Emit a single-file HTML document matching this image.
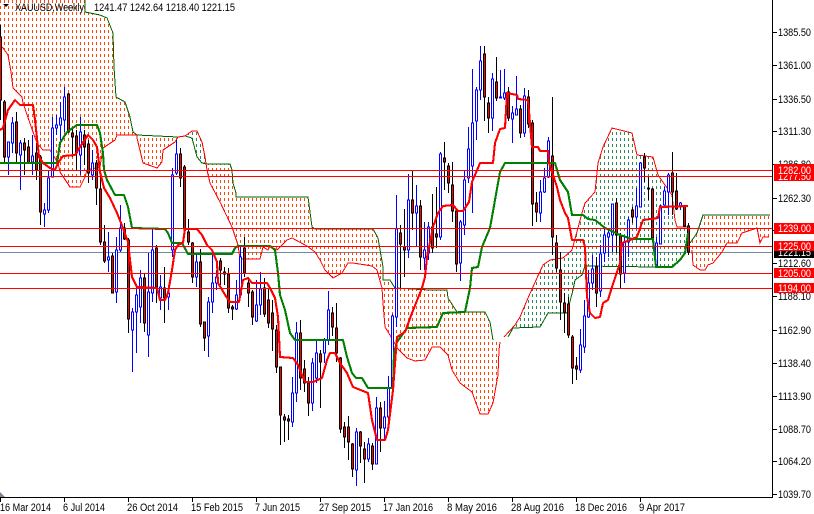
<!DOCTYPE html>
<html><head><meta charset="utf-8"><style>
html,body{margin:0;padding:0;background:#fff;width:814px;height:514px;overflow:hidden}
svg{display:block;position:absolute;left:0;top:0}
text{font-family:"Liberation Sans",sans-serif;font-size:11px;fill:#000}
.w{fill:#fff}
</style></head><body>
<svg width="814" height="514" viewBox="0 0 814 514" xmlns="http://www.w3.org/2000/svg">
<defs>
<pattern id="o" patternUnits="userSpaceOnUse" width="4" height="6"><rect x="0" y="0" width="1" height="3" fill="#FF4500"/></pattern>
<pattern id="g" patternUnits="userSpaceOnUse" width="4" height="6"><rect x="0" y="0" width="1" height="3" fill="#2E8B57"/></pattern>
<clipPath id="c"><rect x="0" y="0" width="772" height="497"/></clipPath>
</defs>
<g clip-path="url(#c)">
<line x1="0" x2="772" y1="252.5" y2="252.5" stroke="#778899"/>
<g shape-rendering="crispEdges">
<polygon fill="url(#o)" points="0,0 85,0 85,12 100,15 107,18 113,33 114,67 116,97 125,102 130,117 133,132 137,135 178,137 185,136 190,136 192,138 197,157 202,163 207,164 230,164 232,170 233,183 236,193 236,197 308,197 312,227 315,229 373,229 378,238 383,267 383,280 390,280 395,288 430,290 447,290 448,298 457,312 485,312 490,322 493,340 500,342 499,350 498,375 493,403 488,414 480,414 472,392 460,383 452,370 448,355 440,347 432,347 425,360 415,361 407,358 397,348 393,340 385,327 383,303 382,288 377,270 372,266 353,263 348,263 342,273 333,278 325,270 320,260 315,252 307,246 292,238 287,240 277,250 270,246 268,250 263,247 260,259 240,259 238,245 232,227 220,202 210,183 207,170 205,157 202,142 197,131 192,131 185,136 178,137 175,142 163,150 162,162 157,168 143,163 137,138 137,135 123,135 117,135 115,140 103,148 100,167 87,170 85,177 80,187 70,187 60,172 58,163 50,150 43,150 37,143 33,132 23,103 22,97 13,88 11,72 8,55 3,48 0,46"/>
<polygon fill="url(#g)" points="185,136 192,131 197,131 202,142 205,157 207,163 202,163 197,157 192,138"/>
<polygon fill="url(#g)" points="504,337 515,325 520,317 528,298 537,278 543,265 550,260 563,258 572,250 582,213 585,203 595,192 598,163 603,147 612,128 632,133 637,155 653,157 658,175 672,195 675,220 677,227 688,227 688,233 685,253 680,260 672,267 585,266 582,275 575,280 573,290 567,313 548,313 543,318 540,327 513,328 508,337"/>
<polygon fill="url(#o)" points="690,243 697,233 703,215 770,215 769,237 763,237 760,243 757,228 742,233 737,243 727,243 722,252 713,263 708,265 705,270 700,270 693,265 692,250"/>
</g>
<g fill="none" stroke-width="1" shape-rendering="crispEdges">
<polyline stroke="#006400" points="85,0 85,12 100,15 107,18 113,33 114,67 116,97 125,102 130,117 133,132 137,135 178,137 185,136 192,138 197,157 202,163 207,164 230,164 232,170 233,183 236,193 236,197 308,197 312,227 315,229 373,229 378,238 383,267 383,280 390,280 395,288 430,290 447,290 448,298 457,312 485,312 490,322 493,340"/>
<polyline stroke="#f00" points="0,46 3,48 8,55 11,72 13,88 22,97 23,103 33,132 37,143 43,150 50,150 58,163 60,172 70,187 80,187 85,177 87,170 100,167 103,148 115,140 117,135 137,135 137,138 143,163 157,168 162,162 163,150 175,142 178,137 185,136 192,131 197,131 202,142 205,157 207,170 210,183 220,202 232,227 238,245 240,259 260,259 263,247 268,250 270,246 277,250 287,240 292,238 307,246 315,252 320,260 325,270 333,278 342,273 348,263 353,263 372,266 377,270 382,288 383,303 385,327 393,340 397,348 407,358 415,361 425,360 432,347 440,347 448,355 452,370 460,383 472,392 480,414 488,414 493,403 498,375 499,350 500,342"/>
<polyline stroke="#f00" points="504,337 515,325 520,317 528,298 537,278 543,265 550,260 563,258 572,250 582,213 585,203 595,192 598,163 603,147 612,128 632,133 637,155 653,157 658,175 672,195 675,220 677,227 688,227"/>
<polyline stroke="#006400" points="508,337 513,328 540,327 548,313 567,313 573,290 575,280 582,275 585,266 655,267"/>
<polyline stroke="#006400" points="690,243 697,233 703,215 770,215"/>
<polyline stroke="#f00" points="692,250 693,265 700,270 705,270 708,265 713,263 722,252 727,243 737,243 742,233 757,228 760,243 763,237 769,237"/>
</g>
<g shape-rendering="crispEdges" stroke-width="1">
<path fill="none" stroke="#00f" d="M8.5 142V175M12.5 117V153M20.5 140V190M32.5 135V175M44.5 203V227M48.5 170V213M52.5 117V177M56.5 115V135M60.5 102V140M64.5 87V132M80.5 117V175M92.5 150V180M108.5 232V272M116.5 237V303M120.5 205V252M132.5 308V372M136.5 285V353M140.5 270V323M148.5 253V357M152.5 228V302M160.5 275V310M168.5 285V310M172.5 168V257M176.5 140V175M196.5 255V287M208.5 297V357M212.5 255V313M216.5 270V290M236.5 280V310M240.5 245V297M256.5 280V322M260.5 272V315M292.5 377V427M296.5 322V402M312.5 358V411M316.5 340V383M324.5 338V363M328.5 291V345M356.5 428V486M368.5 438V462M376.5 397V464M384.5 401V440M388.5 376V420M392.5 314V390M396.5 195V327M408.5 174V258M416.5 185V246M424.5 222V270M428.5 222V260M440.5 152V240M460.5 220V281M464.5 170V235M468.5 127V183M472.5 69V213M476.5 87V140M480.5 46V100M492.5 73V131M500.5 70V98M504.5 69V100M512.5 106V143M516.5 76V115M524.5 88V137M540.5 180V222M544.5 168V193M548.5 137V178M580.5 329V373M584.5 300V353M588.5 270V318M592.5 255V290M600.5 245V297M604.5 228V262M608.5 228V257M612.5 204V252M624.5 237V283M628.5 217V257M636.5 188V228M640.5 162V207M656.5 237V267M660.5 205V244M664.5 187V205M668.5 173V215M680.5 202V210"/>
<path fill="#fff" stroke="#00f" d="M7.5 142h2V157h-2zM11.5 123h2V143h-2zM19.5 143h2V155h-2zM31.5 156h2V162h-2zM43.5 210h2V214h-2zM47.5 178h2V210h-2zM51.5 128h2V177h-2zM55.5 125h2V128h-2zM59.5 118h2V125h-2zM63.5 97h2V120h-2zM79.5 132h2V155h-2zM91.5 163h2V175h-2zM107.5 257h2V260h-2zM115.5 250h2V292h-2zM119.5 228h2V250h-2zM131.5 312h2V330h-2zM135.5 295h2V312h-2zM139.5 278h2V307h-2zM147.5 292h2V335h-2zM151.5 250h2V293h-2zM159.5 287h2V298h-2zM167.5 293h2V297h-2zM171.5 175h2V250h-2zM175.5 154h2V173h-2zM195.5 262h2V277h-2zM207.5 302h2V336h-2zM211.5 283h2V302h-2zM215.5 277h2V283h-2zM235.5 295h2V309h-2zM239.5 257h2V295h-2zM255.5 305h2V321h-2zM259.5 289h2V305h-2zM291.5 393h2V422h-2zM295.5 333h2V393h-2zM311.5 363h2V403h-2zM315.5 353h2V378h-2zM323.5 340h2V353h-2zM327.5 310h2V340h-2zM355.5 432h2V470h-2zM367.5 444h2V459h-2zM375.5 408h2V464h-2zM383.5 417h2V428h-2zM387.5 388h2V417h-2zM391.5 316h2V387h-2zM395.5 229h2V317h-2zM407.5 200h2V250h-2zM415.5 206h2V213h-2zM423.5 250h2V258h-2zM427.5 227h2V253h-2zM439.5 154h2V237h-2zM459.5 222h2V263h-2zM463.5 180h2V225h-2zM467.5 149h2V178h-2zM471.5 123h2V166h-2zM475.5 90h2V121h-2zM479.5 61h2V90h-2zM491.5 79h2V118h-2zM499.5 97h2V98h-2zM503.5 93h2V98h-2zM511.5 113h2V119h-2zM515.5 109h2V115h-2zM523.5 96h2V133h-2zM539.5 192h2V213h-2zM543.5 178h2V192h-2zM547.5 141h2V177h-2zM579.5 345h2V370h-2zM583.5 316h2V347h-2zM587.5 283h2V317h-2zM591.5 269h2V283h-2zM599.5 254h2V291h-2zM603.5 235h2V253h-2zM607.5 233h2V237h-2zM611.5 204h2V235h-2zM623.5 242h2V273h-2zM627.5 220h2V242h-2zM635.5 206h2V217h-2zM639.5 163h2V207h-2zM655.5 243h2V267h-2zM659.5 206h2V244h-2zM663.5 191h2V205h-2zM667.5 175h2V192h-2zM679.5 203h2V207h-2z"/>
<path fill="none" stroke="#000" d="M0.5 25V120M4.5 100V163M16.5 112V163M24.5 138V175M28.5 140V163M36.5 143V180M40.5 155V225M68.5 93V133M72.5 127V157M76.5 130V170M84.5 130V165M88.5 140V183M96.5 160V205M100.5 170V245M104.5 225V263M112.5 253V293M124.5 223V240M128.5 238V333M144.5 273V332M156.5 245V303M164.5 267V323M180.5 148V187M184.5 165V238M188.5 219V245M192.5 242V283M200.5 249V327M204.5 322V351M220.5 258V285M224.5 267V285M228.5 268V313M232.5 305V320M244.5 237V277M248.5 277V307M252.5 290V325M264.5 278V317M268.5 288V328M272.5 300V351M276.5 325V373M280.5 367V445M284.5 414V442M288.5 415V440M300.5 320V390M304.5 360V392M308.5 377V416M320.5 350V408M332.5 307V336M336.5 303V362M340.5 357V433M344.5 422V448M348.5 416V460M352.5 443V477M360.5 431V463M364.5 442V483M372.5 443V470M380.5 402V452M400.5 225V288M404.5 209V277M412.5 170V230M420.5 200V270M432.5 194V253M436.5 187V248M444.5 142V190M448.5 163V193M452.5 162V222M456.5 208V272M484.5 46V121M488.5 97V133M496.5 57V101M508.5 87V121M520.5 105V138M528.5 90V128M532.5 120V226M536.5 192V222M552.5 97V255M556.5 235V272M560.5 252V320M564.5 293V333M568.5 297V338M572.5 335V384M576.5 357V380M596.5 257V307M616.5 198V253M620.5 233V288M632.5 207V223M644.5 153V182M648.5 177V200M652.5 188V238M672.5 152V215M676.5 173V210M684.5 206V227M688.5 223V255"/>
<path fill="#f00" stroke="#000" d="M-.5 37h2V100h-2zM3.5 102h2V157h-2zM15.5 122h2V153h-2zM23.5 143h2V150h-2zM27.5 147h2V163h-2zM35.5 153h2V170h-2zM39.5 157h2V212h-2zM67.5 94h2V132h-2zM71.5 133h2V137h-2zM75.5 136h2V153h-2zM83.5 135h2V147h-2zM87.5 144h2V173h-2zM95.5 163h2V188h-2zM99.5 189h2V242h-2zM103.5 242h2V261h-2zM111.5 256h2V293h-2zM123.5 228h2V239h-2zM127.5 240h2V319h-2zM143.5 278h2V323h-2zM155.5 248h2V287h-2zM163.5 288h2V298h-2zM179.5 154h2V178h-2zM183.5 167h2V229h-2zM187.5 232h2V242h-2zM191.5 243h2V277h-2zM199.5 262h2V324h-2zM203.5 322h2V338h-2zM219.5 261h2V270h-2zM223.5 272h2V274h-2zM227.5 274h2V308h-2zM231.5 307h2V309h-2zM243.5 248h2V273h-2zM247.5 283h2V293h-2zM251.5 292h2V317h-2zM263.5 288h2V314h-2zM267.5 300h2V323h-2zM271.5 313h2V329h-2zM275.5 330h2V367h-2zM279.5 367h2V415h-2zM283.5 417h2V420h-2zM287.5 419h2V421h-2zM299.5 333h2V378h-2zM303.5 369h2V383h-2zM307.5 383h2V403h-2zM319.5 354h2V362h-2zM331.5 313h2V327h-2zM335.5 328h2V353h-2zM339.5 358h2V429h-2zM343.5 427h2V437h-2zM347.5 427h2V442h-2zM351.5 444h2V469h-2zM359.5 432h2V446h-2zM363.5 449h2V459h-2zM371.5 446h2V464h-2zM379.5 408h2V428h-2zM399.5 233h2V244h-2zM403.5 247h2V250h-2zM411.5 200h2V213h-2zM419.5 206h2V257h-2zM431.5 227h2V248h-2zM435.5 234h2V237h-2zM443.5 158h2V162h-2zM447.5 166h2V183h-2zM451.5 185h2V211h-2zM455.5 211h2V264h-2zM483.5 54h2V97h-2zM487.5 103h2V118h-2zM495.5 82h2V98h-2zM507.5 92h2V118h-2zM519.5 109h2V133h-2zM527.5 97h2V124h-2zM531.5 123h2V204h-2zM535.5 203h2V212h-2zM551.5 156h2V237h-2zM555.5 243h2V268h-2zM559.5 270h2V302h-2zM563.5 303h2V312h-2zM567.5 304h2V335h-2zM571.5 337h2V368h-2zM575.5 366h2V369h-2zM595.5 267h2V293h-2zM615.5 203h2V235h-2zM619.5 235h2V274h-2zM631.5 210h2V217h-2zM643.5 157h2V168h-2zM647.5 188h2V189h-2zM651.5 189h2V238h-2zM671.5 173h2V192h-2zM675.5 191h2V209h-2zM683.5 206h2V226h-2zM687.5 226h2V252h-2z"/>
</g>
<g fill="none" stroke-width="2.1" shape-rendering="crispEdges" stroke-linejoin="round">
<polyline stroke="#008000" points="0,163 57,163 58,157 60,143 67,132 77,125 97,125 100,133 103,153 104,170 107,180 115,195 124,195 128,207 132,228 165,229 168,233 172,243 182,243 188,254 232,254 235,248 238,246 270,246 275,250 278,273 280,295 285,310 290,333 295,340 343,340 347,357 352,373 356,378 362,378 368,388 393,388 394,353 397,342 407,328 437,327 443,313 465,312 470,288 472,268 478,267 482,247 490,228 495,200 500,172 505,163 555,163 560,180 568,192 572,215 583,215 588,219 595,220 605,228 620,235 632,239 653,239 656,267 672,267 680,260 685,253 688,233"/>
<polyline stroke="#f00" points="0,130 3,128 8,110 15,100 20,105 33,105 35,120 39,157 43,163 50,168 55,170 58,163 63,156 75,155 80,147 88,135 93,140 97,147 100,172 104,188 110,198 117,213 123,228 128,242 132,277 137,287 157,288 160,300 165,300 168,293 172,270 175,250 178,245 183,243 185,229 197,229 202,235 207,245 212,250 217,262 218,283 227,298 230,302 239,302 243,280 248,278 252,283 267,283 270,288 275,298 278,317 280,357 293,358 298,365 305,382 313,382 322,378 327,360 330,353 335,353 340,363 347,373 353,387 368,393 372,420 377,440 385,440 388,430 393,390 397,337 405,332 412,313 422,288 425,277 427,257 433,227 438,213 443,206 453,205 458,211 463,211 469,202 472,182 478,168 480,163 493,163 495,143 500,129 505,128 507,93 517,95 518,99 528,100 532,147 538,147 540,151 548,151 549,163 557,187 560,200 565,213 568,218 572,240 583,240 585,247 587,297 590,313 595,318 600,317 603,303 608,300 612,287 620,263 622,243 630,240 637,237 643,220 658,218 660,207 688,206"/>
</g>
<g stroke="#f00" shape-rendering="crispEdges">
<line x1="0" x2="772" y1="170.5" y2="170.5"/>
<line x1="0" x2="772" y1="176.5" y2="176.5"/>
<line x1="0" x2="772" y1="228.5" y2="228.5"/>
<line x1="0" x2="772" y1="246.5" y2="246.5"/>
<line x1="0" x2="772" y1="273.5" y2="273.5"/>
<line x1="0" x2="772" y1="288.5" y2="288.5"/>
</g>
<polygon points="0,492 5,497 0,497" fill="#778899"/>
</g>
<polygon points="3,4 9,4 6,7" fill="#000"/>
<text x="15" y="11" textLength="69" lengthAdjust="spacingAndGlyphs">XAUUSD,Weekly</text>
<text x="94" y="11" textLength="141" lengthAdjust="spacingAndGlyphs">1241.47 1242.64 1218.40 1221.15</text>
<g shape-rendering="crispEdges" stroke="#000">
<line x1="772.5" x2="772.5" y1="0" y2="497"/>
<line x1="0" x2="773" y1="497.5" y2="497.5"/>
<path fill="none" d="M773 32.5h4M773 65.5h4M773 99.5h4M773 131.5h4M773 164.5h4M773 198.5h4M773 230.5h4M773 263.5h4M773 296.5h4M773 330.5h4M773 363.5h4M773 396.5h4M773 429.5h4M773 461.5h4M773 494.5h4M.5 498v4M64.5 498v4M128.5 498v4M192.5 498v4M256.5 498v4M320.5 498v4M384.5 498v4M448.5 498v4M512.5 498v4M576.5 498v4M640.5 498v4"/>
</g>
<g>
<text x="778" y="36" textLength="33" lengthAdjust="spacingAndGlyphs">1385.50</text>
<text x="778" y="69" textLength="33" lengthAdjust="spacingAndGlyphs">1361.00</text>
<text x="778" y="103" textLength="33" lengthAdjust="spacingAndGlyphs">1336.50</text>
<text x="778" y="135" textLength="33" lengthAdjust="spacingAndGlyphs">1311.30</text>
<text x="778" y="168" textLength="33" lengthAdjust="spacingAndGlyphs">1286.80</text>
<text x="778" y="202" textLength="33" lengthAdjust="spacingAndGlyphs">1262.30</text>
<text x="778" y="234" textLength="33" lengthAdjust="spacingAndGlyphs">1237.80</text>
<text x="778" y="267" textLength="33" lengthAdjust="spacingAndGlyphs">1212.60</text>
<text x="778" y="300" textLength="33" lengthAdjust="spacingAndGlyphs">1188.10</text>
<text x="778" y="334" textLength="33" lengthAdjust="spacingAndGlyphs">1162.90</text>
<text x="778" y="367" textLength="33" lengthAdjust="spacingAndGlyphs">1138.40</text>
<text x="778" y="400" textLength="33" lengthAdjust="spacingAndGlyphs">1113.90</text>
<text x="778" y="433" textLength="33" lengthAdjust="spacingAndGlyphs">1088.70</text>
<text x="778" y="465" textLength="33" lengthAdjust="spacingAndGlyphs">1064.20</text>
<text x="778" y="498" textLength="33" lengthAdjust="spacingAndGlyphs">1039.70</text>
</g>
<g shape-rendering="crispEdges">
<rect x="774" y="171" width="40" height="10" fill="#f00"/>
<text class="w" x="778" y="180" textLength="33" lengthAdjust="spacingAndGlyphs">1277.50</text>
<rect x="774" y="164" width="40" height="11" fill="#f00"/>
<text class="w" x="778" y="174" textLength="33" lengthAdjust="spacingAndGlyphs">1282.00</text>
<rect x="774" y="223" width="40" height="11" fill="#f00"/>
<text class="w" x="778" y="232" textLength="33" lengthAdjust="spacingAndGlyphs">1239.00</text>
<rect x="774" y="247" width="40" height="11" fill="#000"/>
<text class="w" x="778" y="256" textLength="33" lengthAdjust="spacingAndGlyphs">1221.15</text>
<rect x="774" y="241" width="40" height="10" fill="#f00"/>
<text class="w" x="778" y="250" textLength="33" lengthAdjust="spacingAndGlyphs">1225.00</text>
<rect x="774" y="268" width="40" height="10" fill="#f00"/>
<text class="w" x="778" y="277" textLength="33" lengthAdjust="spacingAndGlyphs">1205.00</text>
<rect x="774" y="283" width="40" height="10" fill="#f00"/>
<text class="w" x="778" y="292" textLength="33" lengthAdjust="spacingAndGlyphs">1194.00</text>
</g>
<g>
<text x="0" y="511" textLength="51" lengthAdjust="spacingAndGlyphs">16 Mar 2014</text>
<text x="63" y="511" textLength="42" lengthAdjust="spacingAndGlyphs">6 Jul 2014</text>
<text x="127" y="511" textLength="51" lengthAdjust="spacingAndGlyphs">26 Oct 2014</text>
<text x="191" y="511" textLength="52" lengthAdjust="spacingAndGlyphs">15 Feb 2015</text>
<text x="255" y="511" textLength="45" lengthAdjust="spacingAndGlyphs">7 Jun 2015</text>
<text x="319" y="511" textLength="52" lengthAdjust="spacingAndGlyphs">27 Sep 2015</text>
<text x="383" y="511" textLength="50" lengthAdjust="spacingAndGlyphs">17 Jan 2016</text>
<text x="447" y="511" textLength="50" lengthAdjust="spacingAndGlyphs">8 May 2016</text>
<text x="511" y="511" textLength="53" lengthAdjust="spacingAndGlyphs">28 Aug 2016</text>
<text x="575" y="511" textLength="52" lengthAdjust="spacingAndGlyphs">18 Dec 2016</text>
<text x="639" y="511" textLength="46" lengthAdjust="spacingAndGlyphs">9 Apr 2017</text>
</g>
</svg>
</body></html>
